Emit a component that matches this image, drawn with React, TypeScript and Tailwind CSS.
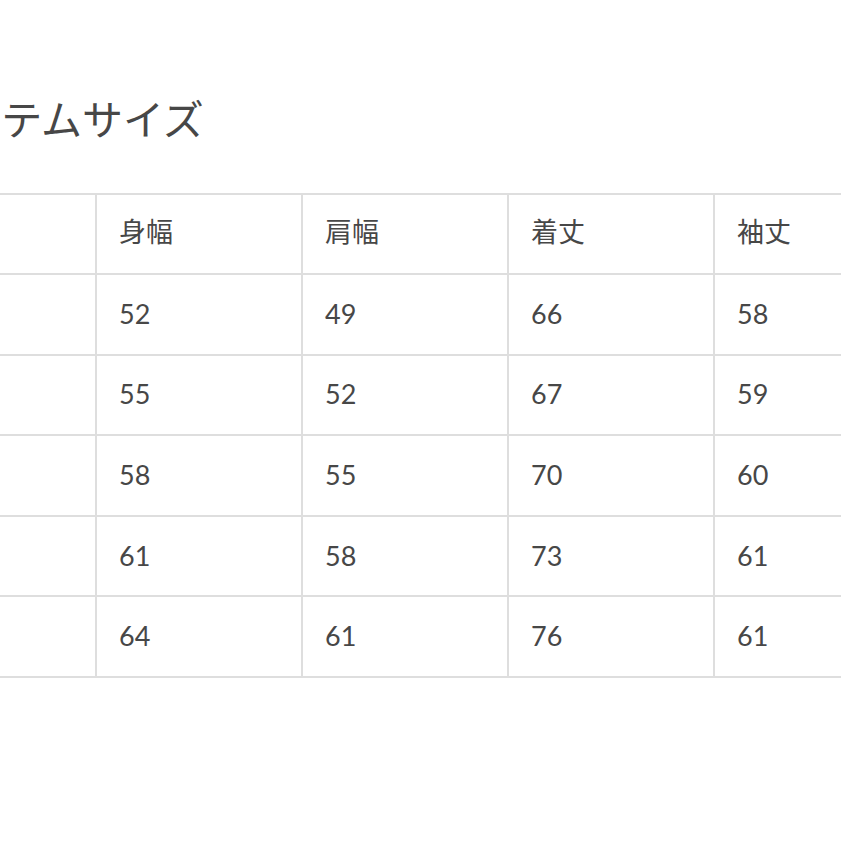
const head = ["サイズ", "身幅", "肩幅", "着丈", "袖丈"];

const rows = [
  ["S", "52", "49", "66", "58"],
  ["M", "55", "52", "67", "59"],
  ["L", "58", "55", "70", "60"],
  ["XL", "61", "58", "73", "61"],
  ["XXL", "64", "61", "76", "61"],
];

const App = () => {
  return (
    <div
      className="w-[841px] h-[841px] overflow-hidden bg-white text-[#474747]"
      style={{ fontFamily: "Lato, 'Noto Sans CJK JP', sans-serif" }}
    >
      <h2 className="mt-[99px] ml-[-78px] text-[41px] leading-none font-normal whitespace-nowrap">
        アイテムサイズ
      </h2>

      <div className="mt-[53px] ml-[-111px] w-[1032px] grid grid-cols-[repeat(5,206px)] border-t-2 border-l-2 border-[#dedede]">
        {head.map((cell) => (
          <div
            key={cell}
            className="h-[80px] flex items-center pl-[22px] pb-[6px] border-r-2 border-b-2 border-[#dedede] text-[27px] leading-none"
          >
            {cell}
          </div>
        ))}
        {rows.map((row, i) =>
          row.map((cell, j) => (
            <div
              key={`${i}-${j}`}
              className="h-[80.6px] flex items-center pl-[22px] pb-[2px] border-r-2 border-b-2 border-[#dedede] text-[27px] leading-none"
            >
              {cell}
            </div>
          ))
        )}
      </div>
    </div>
  );
};

export default App;
